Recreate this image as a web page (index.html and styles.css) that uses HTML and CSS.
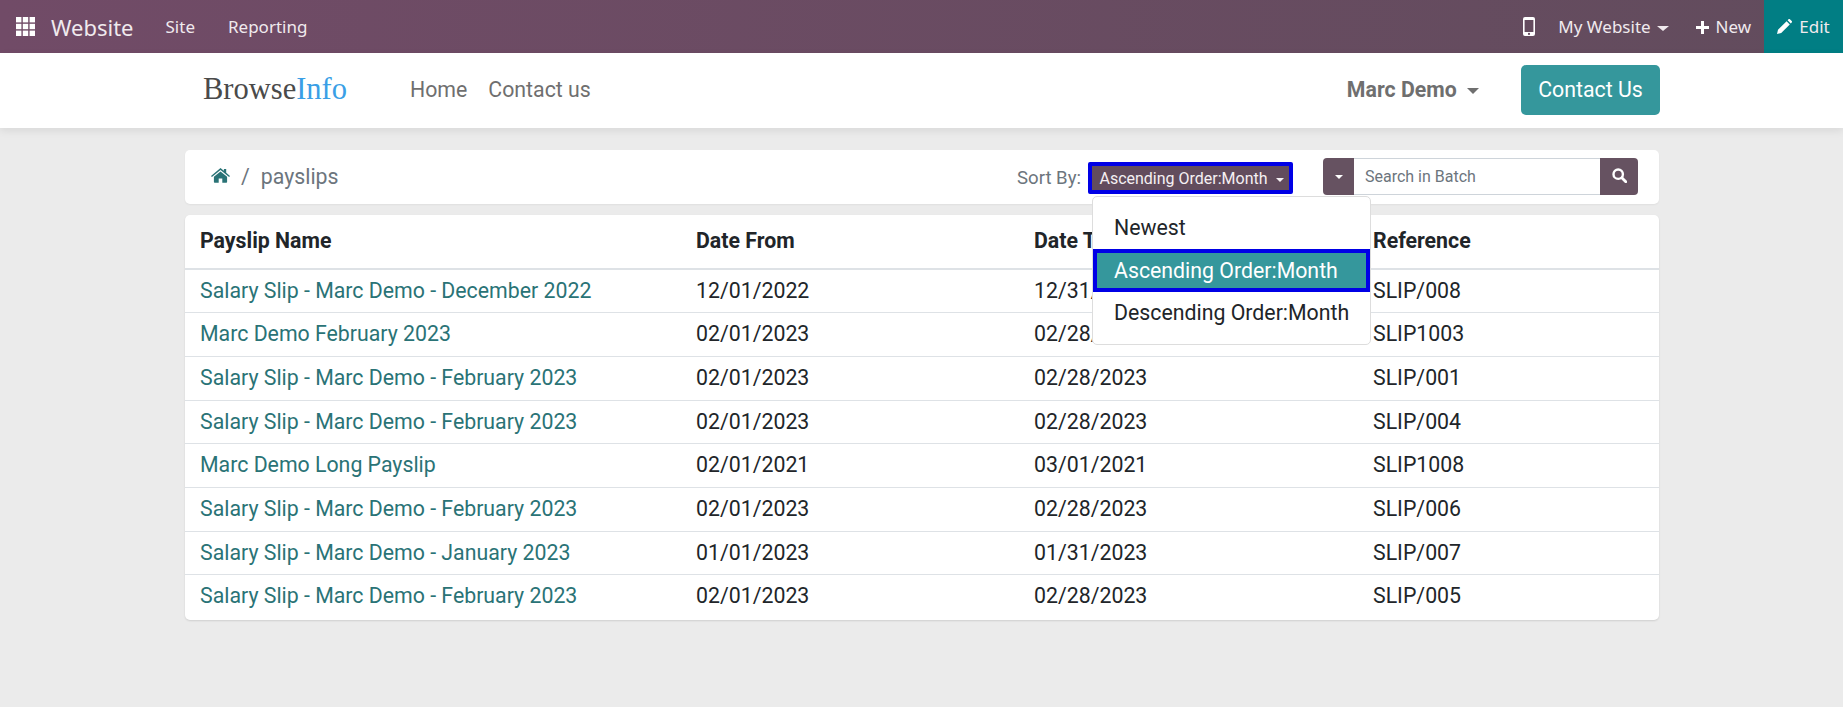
FILE: index.html
```html
<!DOCTYPE html>
<html lang="en">
<head>
  <meta charset="UTF-8" />
  <title>Payslips</title>
  <link rel="stylesheet" href="styles.css">
</head>
<body>
  <nav class="topbar">
    <div class="topbar-left">
      <svg class="apps-icon" width="19" height="19" viewBox="0 0 19 19" fill="#fff">
        <rect x="0" y="0" width="5.4" height="5.4"/><rect x="6.8" y="0" width="5.4" height="5.4"/><rect x="13.6" y="0" width="5.4" height="5.4"/>
        <rect x="0" y="6.8" width="5.4" height="5.4"/><rect x="6.8" y="6.8" width="5.4" height="5.4"/><rect x="13.6" y="6.8" width="5.4" height="5.4"/>
        <rect x="0" y="13.6" width="5.4" height="5.4"/><rect x="6.8" y="13.6" width="5.4" height="5.4"/><rect x="13.6" y="13.6" width="5.4" height="5.4"/>
      </svg>
      <span class="brand">Website</span>
      <a class="top-link site-link">Site</a>
      <a class="top-link">Reporting</a>
    </div>
    <div class="topbar-right">
      <svg class="phone-icon" width="12" height="19" viewBox="0 0 12 19">
        <path fill="#fff" fill-rule="evenodd" d="M2 0h8a2 2 0 0 1 2 2v15a2 2 0 0 1-2 2H2a2 2 0 0 1-2-2V2a2 2 0 0 1 2-2zM1.6 3v12h8.8V3zM6 15.8a1.1 1.1 0 1 0 0 2.2 1.1 1.1 0 0 0 0-2.2z"/>
      </svg>
      <a class="top-link my-website">My Website <span class="caret caret-top"></span></a>
      <a class="top-link new-link">
        <svg width="13" height="13" viewBox="0 0 13 13"><path fill="#fff" d="M5 0h3v5h5v3H8v5H5V8H0V5h5z"/></svg>
        New
      </a>
      <a class="edit-link">
        <svg width="15" height="15" viewBox="0 0 15 15"><path fill="#fff" d="M0 15l1-4.2L9.6 2.2l3.2 3.2L4.2 14zM10.6 1.2L11.5.3a1 1 0 0 1 1.4 0l1.8 1.8a1 1 0 0 1 0 1.4l-.9.9z"/></svg>
        Edit
      </a>
    </div>
  </nav>

  <header class="site-header">
    <div class="logo">Browse<span class="logo-info">Info</span></div>
    <a class="nav-link">Home</a>
    <a class="nav-link">Contact us</a>
    <div class="header-right">
      <span class="user-name">Marc Demo <span class="caret caret-user"></span></span>
      <a class="contact-btn">Contact Us</a>
    </div>
  </header>

  <main class="content">
    <section class="crumb-card">
      <div class="crumbs">
        <svg class="home-icon" width="19" height="16" viewBox="0 0 19 16">
          <path fill="#2a7376" d="M9.5 3.4l6.6 5.4V14a.8.8 0 0 1-.8.8h-4V10.6H7.7v4.2h-4a.8.8 0 0 1-.8-.8V8.8zM9.5 0l3.4 2.8V1h2.3v3.7L19 7.9l-.9 1.1-8.6-7.1L.9 9 0 7.9z"/>
        </svg>
        <span class="crumb-sep">/</span>
        <span class="crumb-name">payslips</span>
      </div>
      <div class="sort">
        <span class="sort-label">Sort By:</span>
        <button class="sort-btn">Ascending Order:Month <span class="caret caret-small"></span></button>
        <div class="sort-menu">
          <a class="sort-item">Newest</a>
          <a class="sort-item sort-active">Ascending Order:Month</a>
          <a class="sort-item">Descending Order:Month</a>
        </div>
      </div>
      <div class="search">
        <button class="search-drop"><span class="caret caret-small"></span></button>
        <div class="search-input">Search in Batch</div>
        <button class="search-go">
          <svg width="15" height="15" viewBox="0 0 15 15"><circle cx="6.2" cy="6.2" r="4.7" fill="none" stroke="#fff" stroke-width="2.4"/><path d="M9.8 9.8l4 4" stroke="#fff" stroke-width="2.8" stroke-linecap="round"/></svg>
        </button>
      </div>
    </section>

    <section class="table-card">
      <table class="slips">
        <thead>
          <tr><th class="col-name">Payslip Name</th><th class="col-from">Date From</th><th class="col-to">Date To</th><th>Reference</th></tr>
        </thead>
        <tbody>
          <tr><td><a>Salary Slip - Marc Demo - December 2022</a></td><td>12/01/2022</td><td>12/31/2022</td><td>SLIP/008</td></tr>
          <tr><td><a>Marc Demo February 2023</a></td><td>02/01/2023</td><td>02/28/2023</td><td>SLIP1003</td></tr>
          <tr><td><a>Salary Slip - Marc Demo - February 2023</a></td><td>02/01/2023</td><td>02/28/2023</td><td>SLIP/001</td></tr>
          <tr><td><a>Salary Slip - Marc Demo - February 2023</a></td><td>02/01/2023</td><td>02/28/2023</td><td>SLIP/004</td></tr>
          <tr><td><a>Marc Demo Long Payslip</a></td><td>02/01/2021</td><td>03/01/2021</td><td>SLIP1008</td></tr>
          <tr><td><a>Salary Slip - Marc Demo - February 2023</a></td><td>02/01/2023</td><td>02/28/2023</td><td>SLIP/006</td></tr>
          <tr><td><a>Salary Slip - Marc Demo - January 2023</a></td><td>01/01/2023</td><td>01/31/2023</td><td>SLIP/007</td></tr>
          <tr><td><a>Salary Slip - Marc Demo - February 2023</a></td><td>02/01/2023</td><td>02/28/2023</td><td>SLIP/005</td></tr>
        </tbody>
      </table>
    </section>
  </main>
</body>
</html>
```

FILE: styles.css
```css
* {
  box-sizing: border-box;
}

html, body {
  height: 100%;
}

body {
  margin: 0;
  background: #ebebeb;
  color: #212529;
  font-family: Roboto, "Noto Sans", sans-serif;
  font-size: 18px;
  overflow: hidden;
}

.caret {
  display: inline-block;
  width: 0;
  height: 0;
  border-style: solid;
  border-color: currentColor transparent transparent transparent;
}

.caret-top {
  border-width: 5px 6px 0 6px;
  margin-left: 2px;
  vertical-align: 2px;
}

.caret-user {
  border-width: 6px 6px 0 6px;
  margin-left: 5px;
  vertical-align: 3px;
}

.caret-small {
  border-width: 4px 4px 0 4px;
  margin-left: 4px;
  vertical-align: 2px;
}

/* top bar */
.topbar {
  height: 53px;
  display: flex;
  justify-content: space-between;
  background: linear-gradient(to right, #714b67, #624c5d);
  color: #f0eaee;
  font-family: "Noto Sans", "Open Sans", sans-serif;
  font-size: 17px;
}

.topbar-left,
.topbar-right {
  display: flex;
  align-items: center;
}

.apps-icon {
  margin-left: 16px;
}

.brand {
  margin-left: 16px;
  font-size: 22px;
}

.top-link {
  white-space: nowrap;
}

.site-link {
  margin-left: 32px;
  margin-right: 33px;
}

.phone-icon {
  margin-right: 23px;
}

.my-website {
  margin-right: 27px;
}

.new-link {
  margin-right: 13px;
}

.new-link svg {
  margin-right: 2px;
  vertical-align: -1px;
}

.edit-link {
  width: 79px;
  height: 53px;
  display: flex;
  align-items: center;
  justify-content: center;
  gap: 7px;
  background: #017e84;
}

/* site header */
.site-header {
  height: 75px;
  padding: 0 183px 2px 203px;
  display: flex;
  align-items: center;
  background: #fff;
  box-shadow: 0 3px 8px rgba(0, 0, 0, 0.08);
  position: relative;
  color: #6f6f6f;
  font-size: 21.3px;
}

.logo {
  width: 207px;
  font-family: "Liberation Serif", serif;
  font-size: 30.5px;
  color: #4a4a4a;
}

.logo-info {
  color: #3a9fe6;
}

.nav-link {
  margin-right: 21px;
}

.header-right {
  margin-left: auto;
  display: flex;
  align-items: center;
}

.user-name {
  font-weight: 700;
  margin-right: 42px;
}

.contact-btn {
  width: 139px;
  height: 50px;
  display: flex;
  align-items: center;
  justify-content: center;
  background: #35979c;
  color: #fff;
  border-radius: 5px;
}

/* page body */
.content {
  width: 1474px;
  margin: 22px 0 0 185px;
}

.crumb-card {
  height: 54px;
  padding: 0 21px 2px 26px;
  display: flex;
  align-items: center;
  background: #fff;
  border-radius: 5px;
  box-shadow: 0 1px 2px rgba(0, 0, 0, 0.05);
}

.crumbs {
  display: flex;
  align-items: center;
  color: #6c757d;
  font-size: 21.3px;
}

.crumb-sep {
  margin: 0 11px;
}

.sort {
  margin-left: auto;
  margin-right: 30px;
  display: flex;
  align-items: center;
  position: relative;
  top: 2px;
}

.sort-label {
  margin-right: 7px;
  color: #6c757d;
  font-size: 18.6px;
}

.sort-btn {
  width: 205px;
  height: 32px;
  padding: 0 0 0 2px;
  background: #624c5d;
  border: 4px solid #0000e6;
  border-radius: 2px;
  color: #f5f0f3;
  font-family: inherit;
  font-size: 16px;
  white-space: nowrap;
}

.sort-menu {
  position: absolute;
  top: 34px;
  right: -78px;
  width: 279px;
  height: 149px;
  padding: 10px 0;
  background: #fff;
  border: 1px solid #ddd;
  border-radius: 5px;
  z-index: 5;
}

.sort-item {
  display: block;
  height: 42px;
  padding: 0 21px;
  line-height: 42px;
  font-size: 21.3px;
  white-space: nowrap;
}

.sort-active {
  height: 43px;
  line-height: 35px;
  background: #35979c;
  border: 4px solid #0000e6;
  padding: 0 17px;
  color: #fff;
}

.search {
  width: 315px;
  height: 37px;
  display: flex;
}

.search-drop,
.search-go {
  padding: 0;
  border: none;
  background: #665261;
  color: #fff;
}

.search-drop {
  width: 31px;
  border-radius: 4px 0 0 4px;
}

.search-drop .caret {
  margin-left: 0;
}

.search-input {
  flex: 1;
  padding-left: 11px;
  border: 1px solid #ced4da;
  border-left: none;
  border-right: none;
  line-height: 35px;
  color: #6c757d;
  font-size: 16px;
}

.search-go {
  width: 38px;
  padding-top: 2px;
  border-radius: 0 4px 4px 0;
}

.table-card {
  margin-top: 11px;
  padding-bottom: 2px;
  background: #fff;
  border-radius: 5px;
  box-shadow: 0 1px 2px rgba(0, 0, 0, 0.12);
  overflow: hidden;
}

.slips {
  width: 100%;
  border-collapse: collapse;
  table-layout: fixed;
}

.slips th,
.slips td {
  padding: 8px 15px;
  text-align: left;
  font-size: 21.3px;
  line-height: 26.65px;
}

.slips th {
  padding-top: 13px;
  padding-bottom: 13px;
  font-weight: 700;
  border-bottom: 2px solid #dee2e6;
}

.slips td {
  border-top: 1px solid #dee2e6;
}

.slips tbody tr:first-child td {
  border-top: none;
}

.slips a {
  color: #2a7376;
}

.col-name {
  width: 496px;
}

.col-from {
  width: 338px;
}

.col-to {
  width: 339px;
}
```
